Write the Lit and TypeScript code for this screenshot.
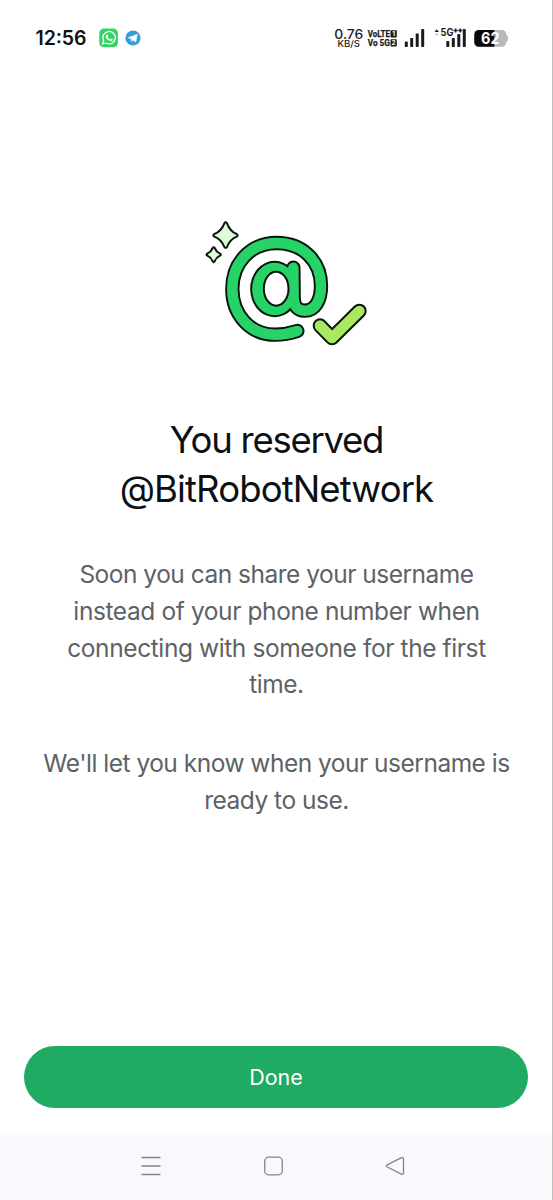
import { LitElement, html, css, svg } from "lit";
import { customElement } from "lit/decorators.js";

const RING =
  "M307 363 C286 370 264 374 240 374 C166 374 112 315 112 237 C112 157 168 99 245 99 C322 99 378 152 378 228 C378 272 360 302 329 302 C307 302 296 288 296 262 L295 173";

@customElement("status-bar")
class StatusBar extends LitElement {
  static styles = css`
    :host { display: block; height: 76px; font-family: Inter, sans-serif; color: #111; }
    .bar { display: flex; justify-content: space-between; height: 76px; }
    svg { display: block; }
  `;
  render() {
    return html`<div class="bar">
      <svg width="160" height="76" viewBox="0 0 160 76">
        <text x="35.5" y="45" font-size="19.5" font-weight="600" textLength="51" fill="#111">12:56</text>
        <rect x="99.3" y="28.6" width="18.6" height="18.6" rx="4.5" fill="#35d366" />
        <path d="M102.6 44 L103.6 40.6 A6.2 6.2 0 1 1 105.9 43 Z" fill="none" stroke="#fff" stroke-width="1.3" stroke-linejoin="round" />
        <path d="M106.5 34.8 c.8-.6 1.2-.2 1.7 1 c.2.6-.6.9-.5 1.3 c.5 1.1 1.3 1.8 2.4 2.3 c.5.1.8-1 1.3-.8 c1.2.5 1.8.9 1 1.9 c-1 1.1-2.7.7-4.3-.5 c-1.9-1.4-3.2-3.6-1.6-5.2z" fill="#fff" />
        <circle cx="133" cy="38" r="7.6" fill="#379fd6" />
        <path d="M128.3 37.8 L137.3 34.2 L135.8 42 L132.9 40 L131.5 41.5 L131.2 39 L135.2 35.8 L130.3 38.8 Z" fill="#fff" stroke="#fff" stroke-width=".5" stroke-linejoin="round" />
      </svg>
      <svg width="223" height="76" viewBox="330 0 223 76">
        <g fill="#1b1b1b">
          <text x="334.3" y="38.8" font-size="13.2" font-weight="500" textLength="29" lengthAdjust="spacingAndGlyphs">0.76</text>
          <text x="337.5" y="47.2" font-size="8.8" font-weight="500" textLength="22.5" lengthAdjust="spacingAndGlyphs">KB/S</text>
          <g font-size="9.4" font-weight="700" font-family="Roboto, sans-serif" stroke="#1b1b1b" stroke-width=".25">
            <text x="367.7" y="37.3" textLength="22.3" lengthAdjust="spacingAndGlyphs">VoLTE</text>
            <text x="367.7" y="46.4" textLength="22.3" lengthAdjust="spacingAndGlyphs">Vo 5G</text>
          </g>
          <rect x="390.5" y="30.3" width="6.3" height="7.2" rx=".8" />
          <rect x="390.5" y="39.3" width="6.3" height="7.2" rx=".8" />
          <g fill="#fff" font-size="6.5" font-weight="700" text-anchor="middle">
            <text x="393.6" y="36.3">1</text>
            <text x="393.6" y="45.3">2</text>
          </g>
          <rect x="404.8" y="41.6" width="3" height="5.4" rx=".8" />
          <rect x="410.2" y="38" width="3" height="9" rx=".8" />
          <rect x="415.7" y="33.5" width="3" height="13.5" rx=".8" />
          <rect x="421.2" y="29" width="3" height="18" rx=".8" />
          <path d="M434.5 32 L436.7 29.2 L438.9 32 Z" />
          <path d="M434.8 33.8 h3.8 l-1.9 1.8z" fill="#aaa" />
          <text x="440.6" y="36.4" font-size="10" font-weight="700" textLength="12.8" lengthAdjust="spacingAndGlyphs">5G</text>
          <path d="M453.6 30.6 h4 M455.6 28.6 v4 M458.3 30.6 h4 M460.3 28.6 v4" stroke="#1b1b1b" stroke-width="1.5" />
          <rect x="446.3" y="41" width="3" height="6" rx=".8" />
          <rect x="451.8" y="38" width="3" height="9" rx=".8" />
          <rect x="457.3" y="34" width="3" height="13" rx=".8" />
          <rect x="462.8" y="29" width="3" height="18" rx=".8" />
        </g>
        <rect x="474.3" y="30" width="32" height="16.8" rx="4.5" fill="#b9b9b9" />
        <path d="M506 34.8 q2.2 .8 2.2 3.6 q0 2.8 -2.2 3.6z" fill="#b9b9b9" />
        <path d="M478.8 30 H494.3 V46.8 H478.8 A4.5 4.5 0 0 1 474.3 42.3 V34.5 A4.5 4.5 0 0 1 478.8 30z" fill="#080808" />
        <text x="481" y="44.2" font-size="15.5" font-weight="700" fill="#fff" textLength="18.5" lengthAdjust="spacingAndGlyphs">62</text>
      </svg>
    </div>`;
  }
}

@customElement("username-art")
class UsernameArt extends LitElement {
  static styles = css`
    :host { display: block; }
    svg { display: block; }
  `;
  render() {
    const layer = (c: string, inset: number) => svg`
      <path d=${RING} fill="none" stroke=${c} stroke-width=${43 - inset * 2} stroke-linecap="round" stroke-linejoin="round" />
      <ellipse cx="239" cy="237" rx=${73.5 - inset} ry=${84.5 - inset} fill=${c} />`;
    return html`<svg width="180" height="145" viewBox="0 0 540 435">
      ${layer("#07150d", 0)} ${layer("#27d367", 5.8)}
      <ellipse cx="243.5" cy="236" rx="37" ry="51" fill="#fff" stroke="#07150d" stroke-width="6" />
      <g fill="#dffbd9" stroke="#07150d" stroke-width="6" stroke-linejoin="round">
        <path d="M88 40 Q92 34 96 40 Q105 64 125 72 Q131 76 125 80 Q105 88 96 111 Q92 117 88 111 Q79 88 58 80 Q52 76 58 72 Q79 64 88 40Z" />
        <path d="M53 114 Q56 109 59 114 Q64 126 75 131 Q80 134 75 137 Q64 142 59 154 Q56 159 53 154 Q48 142 37 137 Q32 134 37 131 Q48 126 53 114Z" />
      </g>
      <g fill="none" stroke-linecap="round" stroke-linejoin="round">
        <path d="M375 347 L411 384 L493 303" stroke="#07150d" stroke-width="44" />
        <path d="M375 347 L411 384 L493 303" stroke="#a9e960" stroke-width="32" />
      </g>
    </svg>`;
  }
}

@customElement("nav-bar")
class NavBar extends LitElement {
  static styles = css`
    :host { display: block; }
    .nav { height: 67px; background: #f8f9fc; display: flex; justify-content: center; gap: 100px; padding: 22px 7px 0 0; box-sizing: border-box; }
    svg { display: block; fill: none; stroke: #858587; stroke-width: 1.3; stroke-linejoin: round; }
  `;
  render() {
    return html`<div class="nav">
      <svg width="22" height="22"><path d="M1.5 2.5 h19 M1.5 11 h19 M1.5 19.5 h19" /></svg>
      <svg width="22" height="22"><rect x="2.7" y="2.2" width="17.6" height="17.6" rx="4" /></svg>
      <svg width="22" height="22"><path d="M3.3 9.8 L17.5 2.7 Q19.5 2 19.5 4 V18 Q19.5 20 17.5 19.2 L3.3 12 Q1.6 10.9 3.3 9.8Z" /></svg>
    </div>`;
  }
}

@customElement("app-root")
class AppRoot extends LitElement {
  static styles = css`
    :host { display: block; }
    .screen { position: relative; height: 1200px; background: #fff; display: flex; flex-direction: column; font-family: Inter, sans-serif; overflow: hidden; }
    .screen::after { content: ""; position: absolute; top: 0; right: 0; bottom: 0; width: 1px; background: #bebebe; }
    .content { flex: 1; display: flex; flex-direction: column; align-items: center; padding-top: 134px; text-align: center; }
    .art { padding-left: 17px; }
    h1 { margin: 61px 0 0; font-size: 36.5px; line-height: 49px; font-weight: 400; color: #0b1014; white-space: nowrap; }
    .title-a { letter-spacing: -1.25px; }
    .title-b { letter-spacing: -0.88px; }
    p { margin: 0; font-size: 24.5px; line-height: 36.8px; font-weight: 400; letter-spacing: -0.5px; color: #5e6266; white-space: nowrap; }
    .wide { letter-spacing: -0.4px; }
    .first { margin-top: 42px; }
    .second { margin-top: 42px; }
    button { margin: 0 25px 25px 24px; height: 62px; border: 0; border-radius: 31px; background: #1fab61; color: #fff; font: 400 21.5px Inter, sans-serif; padding: 0; }
  `;
  render() {
    return html`<div class="screen">
      <status-bar></status-bar>
      <div class="content">
        <username-art class="art"></username-art>
        <h1><span class="title-a">You reserved</span><br /><span class="title-b">@BitRobotNetwork</span></h1>
        <p class="first">Soon you can share your username<br /><span class="wide">instead of your phone number when<br />connecting with someone for the first</span><br />time.</p>
        <p class="second">We'll let you know when your username is<br />ready to use.</p>
      </div>
      <button>Done</button>
      <nav-bar></nav-bar>
    </div>`;
  }
}
